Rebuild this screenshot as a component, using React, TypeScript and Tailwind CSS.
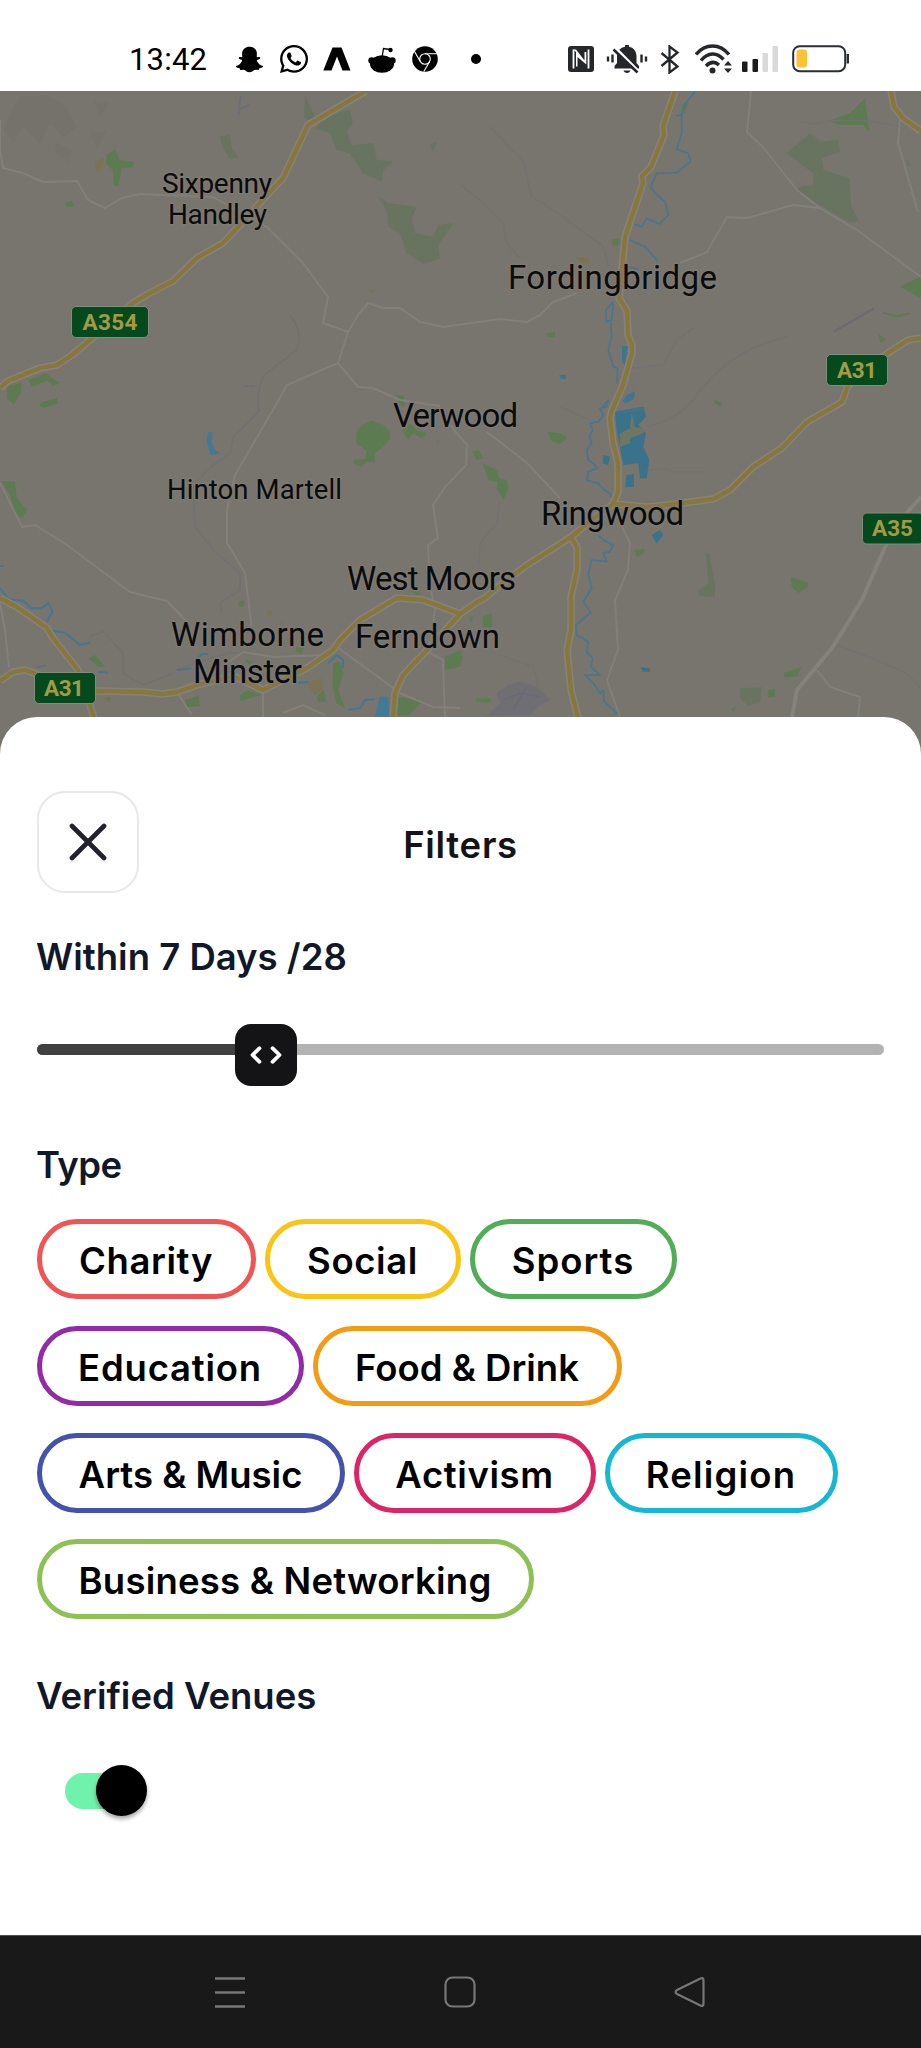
import type { ReactNode } from "react";
import { FaSnapchatGhost, FaWhatsapp } from "react-icons/fa";

const chipRows = [
  [
    { label: "Charity", style: "w-[219px] border-[#f05454] tracking-[0.6px]" },
    { label: "Social", style: "w-[196px] border-[#f9c414] tracking-[0.6px]" },
    { label: "Sports", style: "w-[207px] border-[#52ad57] tracking-[1px]" },
  ],
  [
    { label: "Education", style: "w-[267px] border-[#932aa8] tracking-[0.8px]" },
    { label: "Food & Drink", style: "w-[309px] border-[#f49b14] tracking-normal" },
  ],
  [
    { label: "Arts & Music", style: "w-[308px] border-[#4352ad] tracking-normal" },
    { label: "Activism", style: "w-[242px] border-[#dd2465] tracking-[0.6px]" },
    { label: "Religion", style: "w-[233px] border-[#14b8d0] tracking-[1.2px]" },
  ],
  [{ label: "Business & Networking", style: "w-[497px] border-[#8ec154] tracking-[0.22px]" }],
];

function Svg({ w, h, className = "", children }: { w: number; h: number; className?: string; children: ReactNode }) {
  return (
    <svg width={w} height={h} viewBox={`0 0 ${w} ${h}`} fill="none" className={`shrink-0 ${className}`}>
      {children}
    </svg>
  );
}

function StatusBar() {
  return (
    <header className="flex h-[91px] shrink-0 items-center bg-white pt-[27px] pl-[129px] text-black">
      <span className="w-[107px] font-['Roboto'] text-[31px] leading-none tracking-[0.2px]">13:42</span>
      <FaSnapchatGhost className="h-[27px] w-[27px] shrink-0" />
      <FaWhatsapp className="ml-[15px] h-[32px] w-[32px] shrink-0" />
      <Svg w={28} h={24} className="ml-[13px]">
        <path d="M9.500 0.500h9l9 23h-8L14 9.500 8.500 23.500H0.300z" fill="currentColor" />
      </Svg>
      <Svg w={28} h={27} className="ml-[17px]">
        <ellipse cx="14" cy="18" rx="12" ry="8.800" fill="currentColor" />
        <circle cx="3.500" cy="14.500" r="3.200" fill="currentColor" />
        <circle cx="24.500" cy="14.500" r="3.200" fill="currentColor" />
        <path d="M14 11.500L15.500 2.500 22 3.500" stroke="currentColor" strokeWidth="1.300" />
        <circle cx="22.500" cy="4" r="2.200" fill="currentColor" />
      </Svg>
      <Svg w={26} h={26} className="ml-[16px]">
        <circle cx="13" cy="13" r="12.800" fill="currentColor" />
        <circle cx="13" cy="13" r="5.300" stroke="#fff" strokeWidth="1.100" />
        <path d="M13 7.700H25M8.400 15.700L2.400 5.200M17.600 15.700L11.800 25.500" stroke="#fff" strokeWidth="1.100" />
      </Svg>
      <span className="ml-[33px] h-[10px] w-[10px] shrink-0 rounded-full bg-black" />
      <Svg w={26} h={26} className="ml-[87px]">
        <rect width="26" height="26" rx="3" fill="#26272a" />
        <path d="M5.500 22.500V3.500M20.500 3.500V22.500" stroke="#fff" strokeWidth="1.800" />
        <path d="M5 3.500h3L16.500 14.500V6h1.800v12.500L9.500 11V20.500H8V6z" fill="#fff" />
      </Svg>
      <Svg w={42} h={30} className="ml-[12px]">
        <path d="M2 12.500v5M6.500 10.500v8M35.500 10.500v8M40 12.500v5" stroke="#26272a" strokeWidth="2.400" />
        <path d="M8.500 24.500v-2.500l2.500-3v-7c0-5 3.500-8.500 8-9.200V1h4v1.800c4.500.8 7.500 4.500 7.500 9.200v7l2.500 3v2.500z" fill="#26272a" />
        <path d="M17.500 26.500h7c-.5 1.500-1.800 2.500-3.500 2.500s-3-1-3.500-2.500z" fill="#26272a" />
        <path d="M8 2.500L34 29" stroke="#fff" strokeWidth="3" />
        <path d="M7.500 5.500L31.500 28.500" stroke="#26272a" strokeWidth="2.600" />
      </Svg>
      <Svg w={20} h={29} className="ml-[12px]">
        <path d="M1.500 8L17.500 21.500 9.500 27.500V1.500L17.500 7.500 1.500 21" stroke="#26272a" strokeWidth="2.300" />
      </Svg>
      <Svg w={38} h={30} className="ml-[15px]">
        <path d="M1 10.500C10-1 25-1 34 10.500M6 16.500C13 8 22 8 28.500 15.500M11 22C15.500 17.500 20 17.500 24 21" stroke="#26272a" strokeWidth="3.500" />
        <circle cx="17.500" cy="26.500" r="3" fill="#26272a" />
        <path d="M29 21.500l4-4.500 4 4.500zM29 24.500l4 4.500 4-4.500z" fill="#26272a" />
      </Svg>
      <Svg w={36} h={26} className="ml-[9px]">
        <rect y="15.500" width="5.500" height="10.500" rx="1" fill="#1c1c1e" />
        <rect x="10.500" y="13" width="5.500" height="13" rx="1" fill="#1c1c1e" />
        <rect x="20.500" y="7" width="5.500" height="19" rx="1" fill="#d9d9d9" />
        <rect x="30.500" width="5.500" height="26" rx="1" fill="#d9d9d9" />
      </Svg>
      <Svg w={58} h={28} className="ml-[14px]">
        <rect x="1.200" y="1.200" width="52" height="25" rx="6.500" stroke="#2a2d33" strokeWidth="2" />
        <rect x="4.500" y="4.500" width="10.500" height="18" rx="3" fill="#fcc434" />
        <path d="M55.800 9v9.500" stroke="#2a2d33" strokeWidth="2.400" />
      </Svg>
    </header>
  );
}

const majorRoads = [
  "M366 91L308 125 283 178 258 205 238 227 223 243 197 258 173 281 148 294 133 303 90 340 72 355 57 365 40 368 8 381 0 388",
  "M675 91L663 126 664 135 651 167 642 176 643 183 625 237 621 280 619 298 627 311 628 335 632 345 632 353 623 385 612 410 610 418 613 443 618 463 618 492 613 504 647 507 667 505 713 499 730 490 753 467 782 448 807 422 842 402 847 388 856 375 888 353 908 340 921 338",
  "M613 504L598 515 583 527 571 537 527 565 500 585 485 598 477 602 460 614 430 647 403 675 395 693 393 717",
  "M571 537L577 547 577 570 571 597 571 630 567 650 571 690 578 718",
  "M0 598L17 607 47 628 53 638 78 670 90 705 94 718",
  "M0 681L13 672 25 670 37 674 60 690 97 691 143 692 162 694 177 692 197 685 233 676 263 690 307 668 333 650 340 640 360 620 397 598 423 600 458 613",
  "M891 91L894 107 903 118 921 131",
];

const minorRoads = [
  "M0 120V150L3 168 23 173 43 182 77 181 88 200 105 208 122 198 140 194 213 197 245 215 267 227 303 263 328 297 323 323 348 332 358 315 368 303 383 308 400 308 420 322 443 327 500 319 527 322 540 315 553 302 577 293",
  "M680 263L707 252 727 217 747 218 793 205 820 208 857 230 921 277",
  "M751 91L747 132 763 147 797 190 820 208",
  "M900 120L898 143 918 212",
  "M348 332L338 363 287 385 273 410 235 475 227 510 227 543 245 573 252 630",
  "M338 363L358 387 373 388 400 400 440 406",
  "M0 483L22 527 35 525 67 545 130 592 167 601 188 623",
  "M450 425L467 445 466 465 445 487 433 505 438 538 428 545 430 587 435 607 430 653 443 660 445 717",
  "M487 432L527 463 560 498",
  "M622 527L630 543 628 570 615 600 618 650 607 680 620 717",
  "M817 670L830 687 860 697 858 717",
  "M0 603L5 630 9 667",
  "M227 663L243 652 273 657 323 655M263 690V717M283 713L303 705 325 715M337 647L400 693 433 707 460 708M177 692L192 715",
];

const labels = [
  { t: "Sixpenny", x: 162, y: 192.500, w: 110, s: 28 },
  { t: "Handley", x: 168, y: 224, w: 99, s: 28 },
  { t: "Fordingbridge", x: 508, y: 289, w: 209, s: 33 },
  { t: "Verwood", x: 393, y: 426.500, w: 125, s: 33 },
  { t: "Hinton Martell", x: 167, y: 498.500, w: 175, s: 27.500 },
  { t: "Ringwood", x: 541, y: 525, w: 143, s: 33 },
  { t: "West Moors", x: 347, y: 589.500, w: 169, s: 33 },
  { t: "Wimborne", x: 171, y: 646, w: 153, s: 33 },
  { t: "Minster", x: 193, y: 683, w: 109, s: 33 },
  { t: "Ferndown", x: 355, y: 647.500, w: 145, s: 33 },
];

const shields = [
  { t: "A354", x: 71.500, y: 306.500, w: 77, tx: 82.500, tw: 55 },
  { t: "A31", x: 826.500, y: 354.500, w: 61, tx: 837, tw: 40 },
  { t: "A35", x: 862.500, y: 513, w: 61, tx: 872, tw: 41 },
  { t: "A31", x: 34.500, y: 672.500, w: 61, tx: 44, tw: 40 },
];

function MapView() {
  return (
    <section className="h-[664px] shrink-0 bg-[#78746e]">
      <svg width="921" height="664" viewBox="0 91 921 664" className="block">
        {/* woodland */}
        <g transform="translate(0 90) scale(.3333)">
          <g fill="#75716b">
            <path d="M60 20L140 15 200 50 230 110 190 140 150 100 120 160 70 110 40 160 10 120 30 70zM170 160L215 180 205 215 165 190zM280 30L330 40 300 80zM270 130L320 125 290 170z" />
          </g>
          <path d="M915 15L945 80 930 95 912 80zM945 115L1000 70 1050 60 1058 100 1040 125 1055 165 1120 160 1130 210 1180 215 1150 240 1145 275 1090 250 1050 190 1010 180 990 130zM1130 315L1165 340 1250 350 1235 385 1245 430 1300 440 1315 405 1360 400 1315 465 1320 505 1270 522 1220 490 1200 430 1165 410 1160 360zM660 140L690 132 695 175 715 200 690 208 665 165zM1290 165L1310 155 1300 185z" fill="#687460" />
          <path d="M320 195L345 178 360 210 400 215 400 232 365 235 355 290 342 285 338 240 318 220zM195 338L215 332 222 350 200 350zM22 890L65 878 62 910 42 943 20 925zM85 870L140 848 155 865 182 878 160 888 140 872 95 890zM122 938L170 925 175 940 130 953zM1190 918L1210 915 1215 945 1200 945z" fill="#5d7b50" />
          <path d="M285 215L312 203 308 235 290 247zM1110 598L1125 600 1118 610z" fill="#7d7256" />
          <path d="M722 18L715 75M715 60L748 45M730 888H765" stroke="#6c6d78" strokeWidth="5" fill="none" />
          <path d="M870 675Q910 720 890 780L800 850Q770 880 775 960" stroke="#72706f" strokeWidth="4" fill="none" />
        </g>
        <g transform="translate(460 90) scale(.3333)">
          <path d="M980 190L1050 130 1085 155 1135 150 1140 185 1085 205 1090 240 1170 265 1172 345 1198 395 1165 395 1010 305 1020 290 1060 285 1060 250z" fill="#687460" />
          <path d="M1108 92L1170 70 1215 25 1228 125 1210 105 1140 105zM1320 590L1383 560V625zM455 450L478 445 478 465 458 468zM262 730L285 725 285 742 262 742zM1255 732L1280 748 1262 760zM762 930L785 940 782 948 765 940zM668 50L685 35 672 75zM1340 205L1352 228 1342 228z" fill="#5d7b50" />
          <path d="M1270 668L1310 680 1350 670" stroke="#5d7b50" strokeWidth="5" fill="none" />
          <path d="M345 500L385 505 390 520 365 520z" fill="#7b7350" />
          <path d="M1122 725L1242 655" stroke="#6c6a70" strokeWidth="6" />
          <path d="M90 110L190 215 215 320 280 360 430 470 445 530M0 285L60 330 130 400 140 460 180 505M1020 95L1060 102 1110 92 1220 92 1300 105M510 835L610 825 650 750 700 715M700 930Q800 780 985 740" stroke="#737171" strokeWidth="4" fill="none" />
        </g>
        <g transform="translate(0 400) scale(.3333)">
          <path d="M5 243L45 245 50 295 82 330 65 355 45 335 30 285zM1070 95L1085 75 1115 62 1150 75 1168 95 1170 115 1150 140 1125 160 1125 185 1100 185 1085 200 1060 190 1065 178 1095 178 1100 152 1068 130zM1205 90L1230 70 1250 90 1280 100 1265 115 1240 100 1225 118zM1195 5L1215 5 1210 20zM265 775L285 765 315 800 295 800zM715 605L732 600 732 618 717 620zM1335 770L1380 750V800L1335 810zM1195 890L1265 905 1225 948 1190 945zM1000 790L1020 785 1030 820 1015 870 1035 925 1010 910 998 860zM950 890L970 870 978 905 955 905zM555 900L595 888 600 918 560 922zM890 740L912 745 905 762 888 755zM720 885L740 872 785 885 722 902zM735 780L760 782 750 795zM315 895L330 890 328 908zM25 0H48L42 10zM120 12L172 0 170 10 122 22zM1225 570L1270 580 1250 585z" fill="#5d7b50" />
          <path d="M920 850L965 835 970 865 945 885zM800 630L818 635 808 655zM1310 115L1320 125 1312 135zM840 660L855 665 845 675zM700 820L725 830 715 845z" fill="#7d7256" />
          <path d="M625 97H637L635 130 645 150 662 160 632 165 625 140 620 120zM1140 890L1165 890 1168 950 1125 948z" fill="#417a96" />
          <path d="M0 565L25 598 70 602 95 625 125 625 145 610 158 635 140 665M160 692L195 698 240 735 270 728M0 498H12M530 810L575 805M595 775L605 762 625 762M985 790L1010 765 1030 780 1028 805M1045 930L1080 925 1095 900 1125 898M890 850L925 845M295 815L325 818" stroke="#45778f" strokeWidth="6" fill="none" />
          <path d="M110 802L138 797" stroke="#676c78" strokeWidth="6" />
          <path d="M780 30L700 110 690 160 620 210 580 260 585 380 650 460 720 520 720 570 660 610 665 640M270 710L310 695 370 760 370 820 430 855 520 820M540 805L680 760 750 755" stroke="#717172" strokeWidth="4" fill="none" />
        </g>
        <g transform="translate(460 400) scale(.3333)">
          <path d="M262 95L300 100 322 115 300 132 275 122zM38 155L55 150 70 175 50 180zM68 190L110 210 118 235 140 240 145 265 130 300 110 265 112 245 85 240zM525 450L555 448 550 462 530 472zM992 532L1045 548 1045 558 1015 580 995 560zM970 820L1025 800 1010 830 975 832zM925 870L945 868 945 890 925 892zM67 650L95 640 97 682 70 680zM48 895L92 895 92 908 50 905zM0 745L8 770 0 800zM765 0L785 10 780 20zM815 930L828 918 822 935zM25 650L40 650 35 668z" fill="#5d7b50" />
          <path d="M738 460L748 462 765 555 765 590 720 588 715 572 745 550zM840 865L905 862 900 905 865 918 840 895z" fill="#687460" />
          <path d="M110 880L145 855 180 845 215 855 235 865 270 900 240 915 210 945 80 948 120 910z" fill="#6f6e72" />
          <path d="M130 900L180 880 240 890M160 930L200 860" stroke="#67697a" strokeWidth="4" fill="none" />
          <path d="M465 35L550 20 558 50 535 75 558 100 550 140 568 180 560 235 540 235 535 190 490 195 480 140 470 90zM430 165L450 170 445 195 428 190zM500 225L522 222 522 260 495 262zM575 405L600 390 610 405 590 430zM542 802L570 805 570 815 548 815zM488 0H515L495 10z" fill="#3b728b" />
          <path d="M515 40L525 80 555 88 550 100 510 115 510 130 480 140 480 100 510 85z" fill="#6f7762" />
          <path d="M445 0L440 20 420 25 430 45 415 65 390 70 398 90 388 110 395 130 380 150 385 180 400 190 412 205 385 215 380 240 415 250 430 268 450 280 458 300M415 405L430 420 460 435 450 455 430 460 440 485 395 480 385 520 395 565 370 605 393 638 348 675 350 705 385 725 380 755 398 775 392 800 420 825 375 825 400 850 420 880 430 870 432 905 480 948" stroke="#45778f" strokeWidth="5" strokeLinejoin="round" fill="none" />
          <path d="M565 210L610 205 640 215 740 215M560 80Q650 60 700 0M120 300L110 370 60 430 55 500M120 765L220 800 235 860M1130 735L1250 780 1340 820 1383 865M300 20L390 60" stroke="#727273" strokeWidth="4" fill="none" />
        </g>
        {/* rivers */}
        <g transform="translate(460 90) scale(.3333)" fill="none" stroke="#45778f" strokeWidth="5" strokeLinejoin="round">
          <path d="M705 5L672 45 665 75 648 78M665 75L665 130 650 178 685 190 692 215 650 248 590 250 572 290 585 310 615 335 625 375 598 402 560 385 545 410 525 403M510 450L555 470 592 512M505 530L535 538M460 635L438 660 438 695 455 690 460 640M452 695L455 740 445 780 460 830 472 835V880M445 930L420 960" />
        </g>
        <path d="M622 346L628 346 625 366 622 362zM623 400L627 395 635 391 634 399 626 403zM621 411L640 407 645 410 625 413zM559 375L566 375 566 379 561 379z" fill="#3f768e" />

        {/* roads */}
        <g fill="none" strokeLinejoin="round">
          {minorRoads.map((d) => (
            <path key={d} d={d} stroke="#837f79" strokeWidth="2" />
          ))}
          <path d="M921 497L905 515 885 547 862 600 832 648 797 690 792 717" stroke="#85827d" strokeWidth="4" />
          {majorRoads.map((d) => (
            <path key={d} d={d} stroke="#87827a" strokeWidth="7.500" />
          ))}
          {majorRoads.map((d) => (
            <path key={d} d={d} stroke="#87773b" strokeWidth="4.300" />
          ))}
        </g>

        {shields.map((s) => (
          <g key={`${s.t}-${s.x}`}>
            <rect x={s.x} y={s.y} width={s.w} height="31" rx="4.500" fill="#054a1d" stroke="#7f8d7b" strokeWidth="1" />
            <text x={s.tx} y={s.y + 23} textLength={s.tw} className="fill-[#a39a48] font-['Roboto'] text-[22.5px] font-bold">
              {s.t}
            </text>
          </g>
        ))}
        {labels.map((l) => (
          <text
            key={l.t}
            x={l.x}
            y={l.y}
            fontSize={l.s}
            textLength={l.w}
            lengthAdjust="spacing"
            paintOrder="stroke"
            stroke="#7d7973"
            strokeWidth="3"
            className="fill-[#0b0b0b] font-['Roboto']"
          >
            {l.t}
          </text>
        ))}
      </svg>
    </section>
  );
}

function Slider() {
  return (
    <div className="relative mt-[47px] h-[62px] w-[847px] pt-[20px]">
      <div className="h-[11px] overflow-hidden rounded-full bg-[#b3b3b3]">
        <div className="h-full w-[220px] bg-[#404040]" />
      </div>
      <div className="absolute top-0 left-[198px] flex h-[62px] w-[62px] items-center justify-center rounded-[16px] bg-[#141416]">
        <Svg w={32} h={18}>
          <path d="M9.500 2.200L2.500 9 9.500 15.800M22.500 2.200L29.500 9 22.500 15.800" stroke="#fff" strokeWidth="3.800" strokeLinecap="round" strokeLinejoin="round" />
        </Svg>
      </div>
    </div>
  );
}

function FilterSheet() {
  return (
    <main className="relative -mt-[38px] flex h-[1218px] shrink-0 flex-col rounded-t-[37px] bg-white px-[37px] pt-[74px] font-['Inter'] text-[36.5px] leading-[40px] font-semibold text-[#111827]">
      <div className="grid grid-cols-[102px_1fr_102px] items-center">
        <button className="flex h-[102px] w-[102px] items-center justify-center rounded-[28px] border-2 border-[#e8e8e8]">
          <Svg w={38} h={38}>
            <path d="M3 3L35 35M35 3L3 35" stroke="#23222c" strokeWidth="4.700" strokeLinecap="round" />
          </Svg>
        </button>
        <h1 className="pt-[5px] text-center tracking-[0.7px] text-[#141416]">Filters</h1>
      </div>
      <h2 className="mt-[44px] -ml-px">Within 7 Days /28</h2>
      <Slider />
      <h2 className="mt-[59px] -ml-px tracking-[-0.5px]">Type</h2>
      <div className="mt-[34px] flex flex-col gap-[26.8px]">
        {chipRows.map((row) => (
          <div key={row[0].label} className="flex gap-[9px]">
            {row.map((chip) => (
              <button
                key={chip.label}
                className={`flex h-[80px] shrink-0 items-center justify-center rounded-full border-5 pt-[4px] pr-px whitespace-nowrap text-black ${chip.style}`}
              >
                {chip.label}
              </button>
            ))}
          </div>
        ))}
      </div>
      <h2 className="mt-[57px] -ml-px">Verified Venues</h2>
      <div className="mt-[49px] ml-[28px] flex h-[51px] w-[82px] items-center">
        <div className="h-[36px] w-[56px] rounded-full bg-[#71f2ac]" />
        <div className="-ml-[25px] h-[51px] w-[51px] shrink-0 rounded-full bg-black shadow-[0_3px_4px_rgba(0,0,0,0.35)]" />
      </div>
    </main>
  );
}

function NavBar() {
  return (
    <nav className="flex h-[113px] shrink-0 items-center justify-between border-t border-[#4a504e] bg-[#191919] pr-[216px] pl-[214px]">
      <Svg w={32} h={32}>
        <path d="M1 2.500H31M1 16.500H31M1 30.500H31" stroke="#777" strokeWidth="2.600" />
      </Svg>
      <Svg w={32} h={32}>
        <rect x="1.500" y="1.500" width="29" height="29" rx="7" stroke="#777" strokeWidth="2.200" />
      </Svg>
      <Svg w={31} h={32}>
        <path d="M26.500 2.500Q29.500 1 29.500 4.500V27.500Q29.500 31 26.500 29.500L3 18Q0 16 3 14Z" stroke="#777" strokeWidth="2.200" strokeLinejoin="round" />
      </Svg>
    </nav>
  );
}

export default function App() {
  return (
    <div className="flex h-[2048px] w-[921px] flex-col overflow-hidden bg-white">
      <StatusBar />
      <MapView />
      <FilterSheet />
      <NavBar />
    </div>
  );
}
